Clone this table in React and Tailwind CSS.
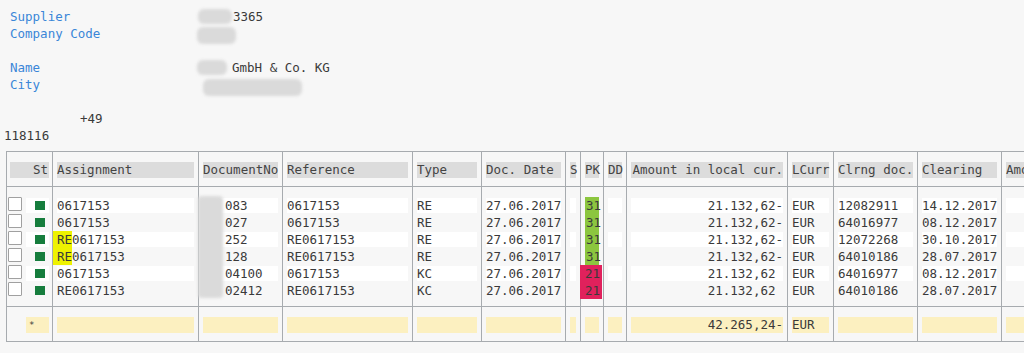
const rows = [
  { asg: "0617153", doc: "083", ref: "0617153", type: "RE", date: "27.06.2017", pk: "31", amt: "21.132,62-", cur: "EUR", clr: "12082911", cdate: "14.12.2017" },
  { asg: "0617153", doc: "027", ref: "0617153", type: "RE", date: "27.06.2017", pk: "31", amt: "21.132,62-", cur: "EUR", clr: "64016977", cdate: "08.12.2017" },
  { asg: "0617153", hl: true, doc: "252", ref: "RE0617153", type: "RE", date: "27.06.2017", pk: "31", amt: "21.132,62-", cur: "EUR", clr: "12072268", cdate: "30.10.2017" },
  { asg: "0617153", hl: true, doc: "128", ref: "RE0617153", type: "RE", date: "27.06.2017", pk: "31", amt: "21.132,62-", cur: "EUR", clr: "64010186", cdate: "28.07.2017" },
  { asg: "0617153", doc: "04100", ref: "0617153", type: "KC", date: "27.06.2017", pk: "21", amt: "21.132,62 ", cur: "EUR", clr: "64016977", cdate: "08.12.2017" },
  { asg: "RE0617153", doc: "02412", ref: "RE0617153", type: "KC", date: "27.06.2017", pk: "21", amt: "21.132,62 ", cur: "EUR", clr: "64010186", cdate: "28.07.2017" },
];

const columns = [
  { key: "asg", label: "Assignment", w: "w-[146px]" },
  { key: "doc", label: "DocumentNo", w: "w-[84px]" },
  { key: "ref", label: "Reference", w: "w-[130px]" },
  { key: "type", label: "Type", w: "w-[69px]" },
  { key: "date", label: "Doc. Date", w: "w-[84px]" },
  { key: "s", label: "S", w: "w-[15px]" },
  { key: "pk", label: "PK", w: "w-[23px]" },
  { key: "dd", label: "DD", w: "w-[23px]" },
  { key: "amt", label: "Amount in local cur.", w: "w-[161px]", right: true, total: "42.265,24-" },
  { key: "cur", label: "LCurr", w: "w-[46px]", total: "EUR" },
  { key: "clr", label: "Clrng doc.", w: "w-[84px]" },
  { key: "cdate", label: "Clearing", w: "w-[84px]" },
  { key: "amo", label: "Amount in doc. curr.", w: "w-[160px]" },
];

function Blur({ className }) {
  return <div className={`shrink-0 rounded-md bg-[#dadada] blur-[1.5px] ${className}`} />;
}

function BodyCell({ col, row, i }) {
  const white = i % 2 === 0 ? "bg-white" : "";

  if (col.key === "pk") {
    if (row.pk === "31")
      return <div className="mx-1 h-[17px] bg-[#8cc63f] pl-px leading-[17px]">31</div>;
    return <div className="-ml-px mr-px h-[17px] bg-[#e0215c] pl-[5px] leading-[17px]">21</div>;
  }

  return (
    <div className="h-[17px] py-px">
      <div className={`mx-1 flex h-full leading-[15px] whitespace-pre ${white} ${col.right ? "justify-end" : ""} ${col.key === "doc" ? "pl-[22px]" : ""}`}>
        {col.key === "asg" && row.hl && (
          <span className="-my-px -ml-1 h-[17px] bg-[#eef200] pl-1 leading-[17px]">RE</span>
        )}
        <span>{row[col.key] || ""}</span>
      </div>
    </div>
  );
}

function Column({ col }) {
  return (
    <div className={`${col.w} flex shrink-0 flex-col border-l border-[#a7abaf]`}>
      <div className="h-[35px] border-b border-[#a7abaf] pt-[10px]">
        <div className={`mx-1 h-4 bg-[#dcdcdc] leading-4 whitespace-nowrap text-[#444] ${col.right ? "text-right" : ""}`}>
          {col.label}
        </div>
      </div>
      <div className="relative h-[120px] border-b border-[#a7abaf] pt-[10px] pb-[7px]">
        {rows.map((row, i) => (
          <BodyCell key={i} col={col} row={row} i={i} />
        ))}
        {col.key === "doc" && <Blur className="absolute top-[9px] -left-px h-[102px] w-[25px] rounded-sm" />}
      </div>
      <div className="h-[34px] pt-[10px]">
        <div className={`mx-1 h-4 bg-[#fcf0c0] leading-4 whitespace-nowrap ${col.right ? "text-right" : ""}`}>
          {col.total || ""}
        </div>
      </div>
    </div>
  );
}

function StatusColumn() {
  return (
    <div className="flex w-[45px] shrink-0 flex-col">
      <div className="h-[35px] border-b border-[#a7abaf] pt-[10px]">
        <div className="mx-[3px] h-4 bg-[#dcdcdc] pr-px text-right leading-4 text-[#444]">St</div>
      </div>
      <div className="h-[120px] border-b border-[#a7abaf] pt-[10px] pb-[7px]">
        {rows.map((row, i) => (
          <div key={i} className="flex h-[17px] items-start">
            <div className="ml-px h-[14px] w-[14px] rounded-[1px] border border-[#a0a0a0] bg-white" />
            <div className={`ml-1 mt-px flex h-[15px] w-[23px] items-center justify-end pr-1 ${i % 2 === 0 ? "bg-white" : ""}`}>
              <div className="h-[9px] w-[10px] bg-[#167d3d]" />
            </div>
          </div>
        ))}
      </div>
      <div className="h-[34px] pt-[10px]">
        <div className="ml-[19px] mr-[3px] h-4 bg-[#fcf0c0] pl-[3px] text-[9px] leading-4">*</div>
      </div>
    </div>
  );
}

export default function App() {
  return (
    <div className="h-[353px] w-[1024px] overflow-hidden bg-[#f7f7f7] font-['DejaVu_Sans_Mono',monospace] text-[12.5px] text-[#3a3a3a]">
      <div className="pt-[8px] leading-[17px]">
        <div className="flex h-[17px] pl-[10px]">
          <span className="w-[188px] text-[#3a86d8]">Supplier</span>
          <Blur className="mt-px h-[15px] w-[34px]" />
          <span className="ml-px">3365</span>
        </div>
        <div className="flex h-[17px] pl-[10px]">
          <span className="w-[187px] text-[#3a86d8]">Company Code</span>
          <Blur className="mt-[2px] h-[17px] w-[39px]" />
        </div>
        <div className="h-[17px]" />
        <div className="flex h-[17px] pl-[10px]">
          <span className="w-[187px] text-[#3a86d8]">Name</span>
          <Blur className="mt-px h-[15px] w-[30px]" />
          <span className="ml-[5px]">GmbH &amp; Co. KG</span>
        </div>
        <div className="flex h-[17px] pl-[10px]">
          <span className="w-[193px] text-[#3a86d8]">City</span>
          <Blur className="mt-[3px] h-[17px] w-[99px]" />
        </div>
        <div className="h-[17px]" />
        <div className="h-[17px] pl-[80px]">+49</div>
        <div className="h-[17px] pl-[4px]">118116</div>
      </div>

      <div className="mt-[7px] ml-[6px] flex w-max border-y border-l border-[#a7abaf]">
        <StatusColumn />
        {columns.map((col) => (
          <Column key={col.key} col={col} />
        ))}
      </div>
    </div>
  );
}
